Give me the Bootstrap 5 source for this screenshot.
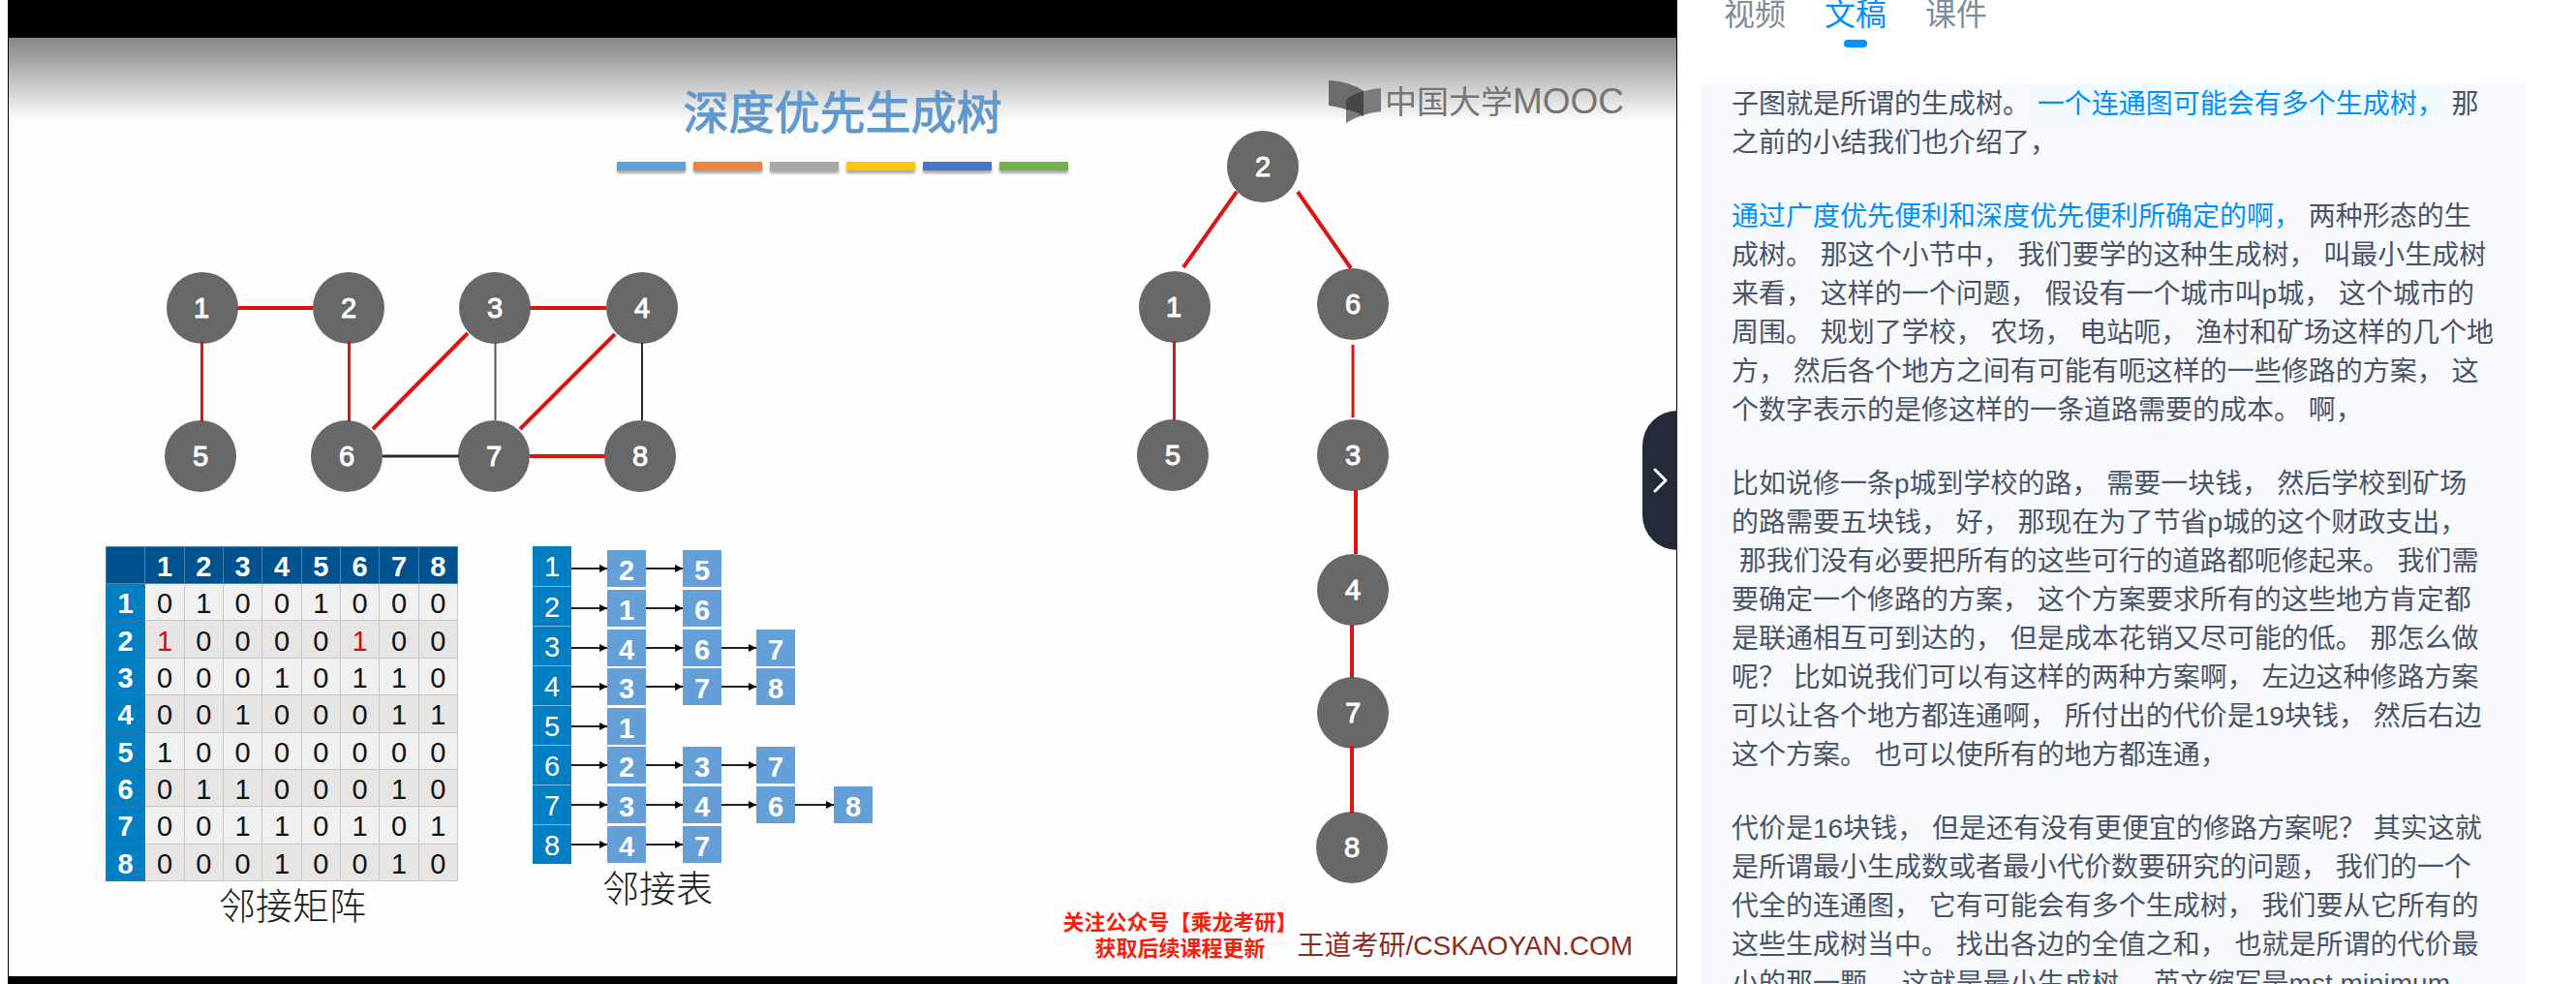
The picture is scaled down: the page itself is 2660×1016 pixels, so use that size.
<!DOCTYPE html>
<html lang="zh-CN">
<head>
<meta charset="utf-8">
<meta name="viewport" content="width=device-width, initial-scale=1">
<title>深度优先生成树</title>
<link href="https://cdn.jsdelivr.net/npm/bootstrap@5.3.0/dist/css/bootstrap.min.css" rel="stylesheet">
<style>
  body { font-family: "Liberation Sans", "Noto Sans CJK SC", sans-serif; background: #fff; }
  .player-page { height: 100vh; padding: 0 52px 0 8px; gap: 24px; }

  /* lecture slide */
  .slide { flex: 1722 1 0; background: #fefefe; border: solid #000; border-width: 39px 1px 8px 1px; }
  .slide::before { content: ""; position: absolute; inset: 0 0 auto 0; height: 88px;
    background: linear-gradient(rgba(0,0,0,.47), rgba(0,0,0,.37) 24%, rgba(0,0,0,.26) 45%, rgba(0,0,0,.05) 88%, rgba(0,0,0,0)); }
  .slide-head { padding-top: 50px; }
  .slide-title { font-size: 47px; line-height: 56px; color: #5f98cc; font-weight: 400; -webkit-text-stroke: 1px #5f98cc; }
  .stripes { margin-top: 22px; gap: 8px; }
  .stripes span { width: 71px; height: 9px; box-shadow: 0 3px 3px rgba(0,0,0,.35); }
  .watermark { top: 38px; right: 54px; gap: 4px; color: #757575; font-size: 33px; line-height: 56px; }
  .watermark .latin { font-size: 37px; }

  .left-col { padding-left: 100px; }
  .graph { margin: 105px 0 0 61px; }
  .tables { margin-top: 56px; gap: 77px; }
  .node { fill: #686868; }
  .num { fill: #fff; stroke: #fff; stroke-width: 1; font-size: 29px; text-anchor: middle; }
  .on { stroke: #dc1414; fill: none; }
  .off { stroke: #2a2a2a; fill: none; }

  .matrix { width: 364px; height: 346px; table-layout: fixed; border-collapse: collapse; text-align: center;
    font-size: 29px; line-height: 33px; color: #111; }
  .matrix th, .matrix td { padding: 4px 0 0; border: 1px solid #c6c6c6; }
  .matrix thead th { background: #00528f; color: #fff; border-color: #4b84b3; }
  .matrix tbody th { background: #027fc3; color: #fff; border-color: #2d76a8; }
  .matrix tbody tr:nth-child(odd) td { background: #f0f0f0; }
  .matrix tbody tr:nth-child(even) td { background: #e6e5e3; }
  .matrix td.hit { color: #c8101e; }
  .fig-name { font-size: 38px; line-height: 52px; font-weight: 300; color: #1a1a1a; }
  .matrix-name { padding-left: 22px; }
  .list-name { padding-left: 72px; }

  .adj-index { width: 40px; height: 328px; background: #027fc3; color: #fff; font-size: 29px; line-height: 38px; }
  .adj-index span + span { border-top: 1px solid #7ab6de; }
  .adj-index span { height: 41px; padding-top: 2px; }
  .adj-rows { height: 325px; margin-top: 3px; }
  .chain { flex: 1 1 0; display: grid; grid-template-columns: 37px 40px 38px 40px 36px 40px 40px 40px; align-items: center; }
  .chain b { height: 38px; background: #659fd8; color: #fff; font-size: 29px; line-height: 42px; text-align: center; }
  .chain i { height: 2px; background: #222; position: relative; }
  .chain i::after { content: ""; position: absolute; right: 0; top: -3px; border: solid transparent; border-width: 4px 0 4px 8px; border-left-color: #000; }

  .right-col { margin-top: -41px; padding-bottom: 15px; }
  .tree { margin-right: 296px; }
  .slide-foot { margin-right: 45px; }
  .follow { color: #f5200c; font-size: 22px; line-height: 27px; font-weight: 700; }
  .brand { color: #8c2a22; font-size: 28px; line-height: 33px; }

  .drawer-btn { right: -1px; top: 385px; width: 36px; height: 144px; background: #242a38; border: 0; border-radius: 36px 0 0 36px; padding: 0 0 0 2px; }

  /* transcript */
  .side { flex: 852 1 0; min-width: 0; }
  .side-tabs { height: 86px; padding-left: 24px; gap: 40px; font-size: 32px; }
  .side-tabs a { color: #808b9b; text-decoration: none; height: 49px; line-height: 30px; position: relative; }
  .side-tabs a.active { color: #0091ff; }
  .side-tabs a.active::after { content: ""; position: absolute; left: 50%; margin-left: -12px; bottom: 0; width: 24px; height: 8px; border-radius: 4px; background: #0091ff; }
  .script { background: #f8f9fd; color: #4a5468; font-size: 28px; line-height: 40px; padding: 2px 32px 0; }
  .script p { margin-bottom: 36px; }
  .said { color: #0091ff; }
  .now { background: #f0faff; padding: 6px 0 2px; }
</style>
<script src="https://cdn.jsdelivr.net/npm/bootstrap@5.3.0/dist/js/bootstrap.bundle.min.js"></script>
</head>
<body>
<div class="player-page d-flex overflow-hidden">

  <main class="slide position-relative d-flex flex-column">
    <header class="slide-head position-relative d-flex flex-column align-items-center">
      <h1 class="slide-title m-0">深度优先生成树</h1>
      <div class="stripes d-flex">
        <span style="background:#629ed8"></span><span style="background:#ec8341"></span><span style="background:#aaa9aa"></span><span style="background:#fec606"></span><span style="background:#4877c8"></span><span style="background:#76b04e"></span>
      </div>
    </header>

    <div class="watermark position-absolute d-flex align-items-center">
      <svg width="54" height="45" viewBox="0 0 54 45" aria-hidden="true">
        <path d="M0 0Q22 1 36 11V37Q20 29 0 26Z" fill="#6c6c6c"/>
        <path d="M18 20Q26 11 54 8V32Q34 34 18 44Z" fill="#7b7b7b"/>
        <path d="M18 20Q24 14 36 11V37Q28 32 18 30Z" fill="#474747"/>
      </svg>
      <span>中国大学<span class="latin">MOOC</span></span>
    </div>

    <div class="d-flex flex-grow-1 justify-content-between">
      <section class="left-col">
        <svg class="graph d-block" width="530" height="227" viewBox="170 281 530 227" role="img" aria-label="图">
          <g class="node"><circle cx="209" cy="318" r="37"/><circle cx="360" cy="318" r="37"/><circle cx="511" cy="318" r="37"/><circle cx="663" cy="318" r="37"/><circle cx="207" cy="471" r="37"/><circle cx="358" cy="471" r="37"/><circle cx="510" cy="471" r="37"/><circle cx="661" cy="471" r="37"/></g>
          <g class="on" stroke-width="4"><path d="M245 318H323M547 318H626M547 471H625M483 344L385 443M635 345L537 443"/><path stroke-width="3" d="M208.500 352V436M360.500 352V436"/></g>
          <g class="off" stroke-width="2"><path d="M511.500 354V434" stroke="#555"/><path d="M663 354V434"/><path d="M395 471H474" stroke-width="3"/></g>
          <g class="num"><text x="208" y="328">1</text><text x="360" y="328">2</text><text x="511" y="328">3</text><text x="663" y="328">4</text><text x="207" y="481">5</text><text x="358" y="481">6</text><text x="510" y="481">7</text><text x="661" y="481">8</text></g>
        </svg>

        <div class="tables d-flex align-items-start">
          <figure class="m-0 text-center">
            <table class="matrix">
              <thead><tr><th></th><th>1</th><th>2</th><th>3</th><th>4</th><th>5</th><th>6</th><th>7</th><th>8</th></tr></thead>
              <tbody>
                <tr><th>1</th><td>0</td><td>1</td><td>0</td><td>0</td><td>1</td><td>0</td><td>0</td><td>0</td></tr>
                <tr><th>2</th><td class="hit">1</td><td>0</td><td>0</td><td>0</td><td>0</td><td class="hit">1</td><td>0</td><td>0</td></tr>
                <tr><th>3</th><td>0</td><td>0</td><td>0</td><td>1</td><td>0</td><td>1</td><td>1</td><td>0</td></tr>
                <tr><th>4</th><td>0</td><td>0</td><td>1</td><td>0</td><td>0</td><td>0</td><td>1</td><td>1</td></tr>
                <tr><th>5</th><td>1</td><td>0</td><td>0</td><td>0</td><td>0</td><td>0</td><td>0</td><td>0</td></tr>
                <tr><th>6</th><td>0</td><td>1</td><td>1</td><td>0</td><td>0</td><td>0</td><td>1</td><td>0</td></tr>
                <tr><th>7</th><td>0</td><td>0</td><td>1</td><td>1</td><td>0</td><td>1</td><td>0</td><td>1</td></tr>
                <tr><th>8</th><td>0</td><td>0</td><td>0</td><td>1</td><td>0</td><td>0</td><td>1</td><td>0</td></tr>
              </tbody>
            </table>
            <figcaption class="fig-name matrix-name">邻接矩阵</figcaption>
          </figure>

          <figure class="m-0">
            <div class="d-flex align-items-start">
              <div class="adj-index d-flex flex-column text-center"><span>1</span><span>2</span><span>3</span><span>4</span><span>5</span><span>6</span><span>7</span><span>8</span></div>
              <div class="adj-rows d-flex flex-column">
                <div class="chain"><i></i><b>2</b><i></i><b>5</b></div>
                <div class="chain"><i></i><b>1</b><i></i><b>6</b></div>
                <div class="chain"><i></i><b>4</b><i></i><b>6</b><i></i><b>7</b></div>
                <div class="chain"><i></i><b>3</b><i></i><b>7</b><i></i><b>8</b></div>
                <div class="chain"><i></i><b>1</b></div>
                <div class="chain"><i></i><b>2</b><i></i><b>3</b><i></i><b>7</b></div>
                <div class="chain"><i></i><b>3</b><i></i><b>4</b><i></i><b>6</b><i></i><b>8</b></div>
                <div class="chain"><i></i><b>4</b><i></i><b>7</b></div>
              </div>
            </div>
            <figcaption class="fig-name list-name">邻接表</figcaption>
          </figure>
        </div>
      </section>

      <section class="right-col position-relative d-flex flex-column align-items-end justify-content-between">
        <svg class="tree d-block" width="262" height="778" viewBox="1173 135 262 778" role="img" aria-label="生成树">
          <g class="node"><circle cx="1304" cy="172" r="37"/><circle cx="1213" cy="317" r="37"/><circle cx="1397" cy="314" r="37"/><circle cx="1211" cy="470" r="37"/><circle cx="1397" cy="470" r="37"/><circle cx="1397" cy="609" r="37"/><circle cx="1397" cy="736" r="37"/><circle cx="1396" cy="875" r="37"/></g>
          <g class="on"><path stroke-width="4" d="M1277 198L1222 276M1340 198L1395 277M1400 506V572M1396 645V700M1396 770V840"/><path stroke-width="3" d="M1212.500 352V434M1397 356V431"/></g>
          <g class="num"><text x="1304" y="182">2</text><text x="1212" y="327">1</text><text x="1397" y="324">6</text><text x="1211" y="480">5</text><text x="1397" y="480">3</text><text x="1397" y="619">4</text><text x="1397" y="746">7</text><text x="1396" y="885">8</text></g>
        </svg>
        <footer class="slide-foot d-flex align-items-end">
          <div class="follow text-center">关注公众号【乘龙考研】<br>获取后续课程更新</div>
          <div class="brand">王道考研/CSKAOYAN.COM</div>
        </footer>
      </section>
    </div>

    <button class="drawer-btn position-absolute d-flex align-items-center justify-content-center" type="button" aria-label="收起">
      <svg width="16" height="28" viewBox="0 0 16 28" fill="none" stroke="#fff" stroke-width="3" stroke-linecap="round" stroke-linejoin="round" aria-hidden="true"><path d="M2 3L13 14L2 25"/></svg>
    </button>
  </main>

  <aside class="side d-flex flex-column">
    <nav class="side-tabs d-flex flex-shrink-0">
      <a href="#video">视频</a>
      <a href="#script" class="active" aria-current="page">文稿</a>
      <a href="#slides">课件</a>
    </nav>
    <article class="script flex-grow-1 overflow-hidden" id="script">
      <p>子图就是所谓的生成树。<span class="said now"> 一个连通图可能会有多个生成树，</span> 那之前的小结我们也介绍了，</p>
      <p><span class="said">通过广度优先便利和深度优先便利所确定的啊，</span> 两种形态的生成树。 那这个小节中， 我们要学的这种生成树， 叫最小生成树来看， 这样的一个问题， 假设有一个城市叫p城， 这个城市的周围。 规划了学校， 农场， 电站呃， 渔村和矿场这样的几个地方， 然后各个地方之间有可能有呃这样的一些修路的方案， 这个数字表示的是修这样的一条道路需要的成本。 啊，</p>
      <p>比如说修一条p城到学校的路， 需要一块钱， 然后学校到矿场<br>的路需要五块钱， 好， 那现在为了节省p城的这个财政支出，<wbr>&nbsp;那我们没有必要把所有的这些可行的道路都呃修起来。 我们需要确定一个修路的方案， 这个方案要求所有的这些地方肯定都是联通相互可到达的， 但是成本花销又尽可能的低。 那怎么做呢？ 比如说我们可以有这样的两种方案啊， 左边这种修路方案可以让各个地方都连通啊， 所付出的代价是19块钱， 然后右边这个方案。 也可以使所有的地方都连通，</p>
      <p>代价是16块钱， 但是还有没有更便宜的修路方案呢？ 其实这就是所谓最小生成数或者最小代价数要研究的问题， 我们的一个代全的连通图， 它有可能会有多个生成树， 我们要从它所有的这些生成树当中。 找出各边的全值之和， 也就是所谓的代价最小的那一颗， 这就是最小生成树， 英文缩写是mst minimum</p>
    </article>
  </aside>
</div>
</body>
</html>
